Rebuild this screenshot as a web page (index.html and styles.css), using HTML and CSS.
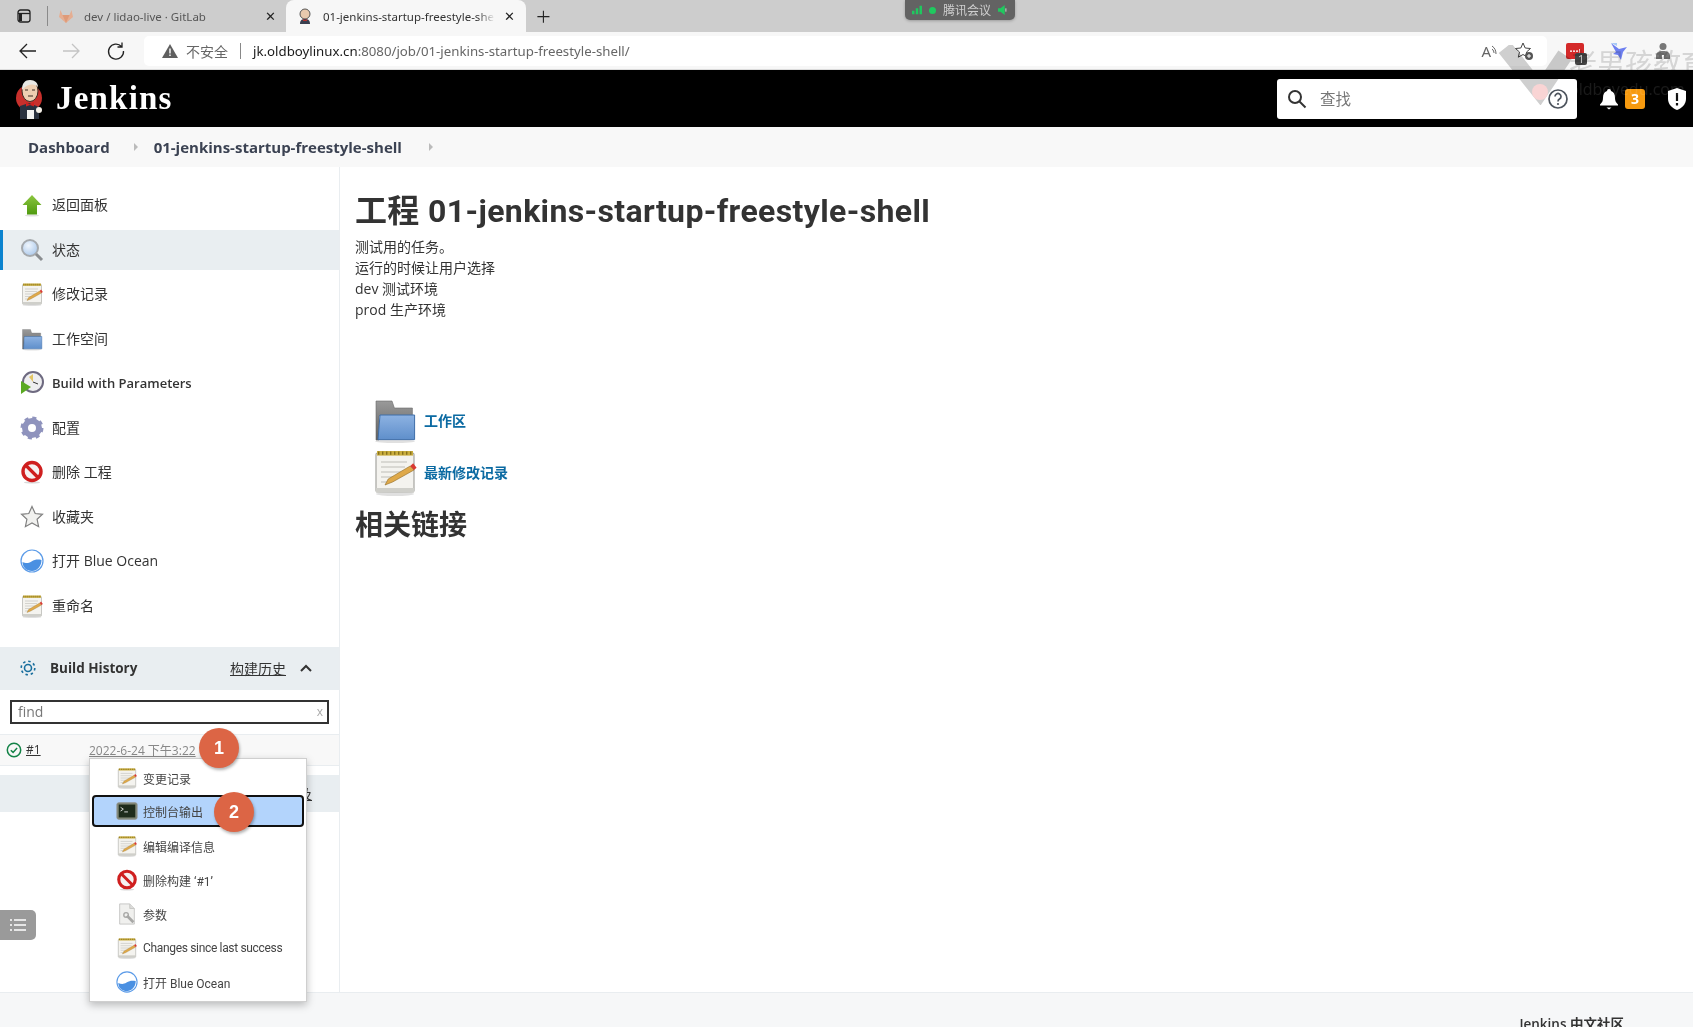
FILE: index.html
```html
<!DOCTYPE html>
<html lang="zh-CN">
<head>
    <meta charset="UTF-8">
    <title>01-jenkins-startup-freestyle-shell</title>
    <link rel="stylesheet" href="styles.css">
</head>
<body>
    <svg class="defs" width="0" height="0">
        <defs>
            <linearGradient id="g-folder-back" x1="0" y1="0" x2="0" y2="1">
                <stop offset="0" stop-color="#9a9a9a"/>
                <stop offset="1" stop-color="#5f5f5f"/>
            </linearGradient>
            <linearGradient id="g-folder-front" x1="0" y1="0" x2="0" y2="1">
                <stop offset="0" stop-color="#8db2e2"/>
                <stop offset="1" stop-color="#5f8fcb"/>
            </linearGradient>
            <linearGradient id="g-arrow" x1="0" y1="0" x2="0" y2="1">
                <stop offset="0" stop-color="#8cc63f"/>
                <stop offset="1" stop-color="#4f9a0f"/>
            </linearGradient>
            <radialGradient id="g-lens" cx=".4" cy=".35" r=".7">
                <stop offset="0" stop-color="#f0f6fd"/>
                <stop offset="1" stop-color="#a9c7ea"/>
            </radialGradient>
            <symbol id="i-note" viewBox="0 0 24 24">
                <ellipse cx="12" cy="23" rx="9.500" ry="1" fill="#000" opacity=".12"/>
                <rect x="2.500" y="2.500" width="19" height="19.500" rx=".8" fill="#f4f3ef" stroke="#a5a5a0" stroke-width=".6"/>
                <rect x="3" y="1.500" width="18" height="2.300" fill="#c9ad3e"/>
                <path d="M3.500 2.600h17" stroke="#86701c" stroke-width="1.600" stroke-dasharray=".7 1.300"/>
                <path d="M5 7h13M5 9.500h12M5 12h10M5 14.500h6M5 17h4" stroke="#bdbdb7" stroke-width=".6"/>
                <rect x="2.500" y="20" width="19" height="2.200" fill="#cfcfca"/>
                <path d="M7 18.500l1.600-3L19.600 9l1.900 2-10.700 6z" fill="#dfa94a" stroke="#8f6a25" stroke-width=".3"/>
                <path d="M19.600 9l1.900 2 1.300-1.100-1.700-2.300z" fill="#d93a33"/>
            </symbol>
            <symbol id="i-folder" viewBox="0 0 24 24">
                <ellipse cx="12" cy="22.600" rx="10" ry=".9" fill="#000" opacity=".12"/>
                <path d="M2.500 22V2.500h8l1.200 3.500h9V10H4v12z" fill="url(#g-folder-back)" stroke="#6a6a6a" stroke-width=".3"/>
                <path d="M3.500 21.800L4.500 9.500h17.300v12.300z" fill="url(#g-folder-front)" stroke="#3f6ea8" stroke-width=".5"/>
            </symbol>
            <symbol id="i-stop" viewBox="0 0 24 24">
                <ellipse cx="12" cy="22.500" rx="8" ry="1" fill="#000" opacity=".15"/>
                <circle cx="12" cy="11.500" r="9" fill="#f6f1f1" stroke="#cf1f1f" stroke-width="3.400"/>
                <path d="M6 5.500l12 12" stroke="#cf1f1f" stroke-width="3.200"/>
            </symbol>
            <symbol id="i-ocean" viewBox="0 0 24 24">
                <circle cx="12" cy="12" r="11" fill="#fff" stroke="#5b9be8" stroke-width="1.200"/>
                <path d="M2.500 13c3 1 5 2 9-.5 3.500-2 6-2.500 10-1.500 0 6-4 11-9.500 11S2.500 18 2.500 13z" fill="#4a90e2"/>
            </symbol>
        </defs>
    </svg>

    <div class="tabstrip">
        <svg class="tab-side" width="16" height="16" viewBox="0 0 16 16"><rect x="2" y="2" width="12" height="12" rx="2.500" fill="none" stroke="#222" stroke-width="1.300"/><path d="M2 5.500h12" stroke="#222" stroke-width="1.300"/><path d="M3 6h3v7H3z" fill="#222"/></svg>
        <span class="tab-sep"></span>
        <div class="tab tab-off">
            <svg class="tab-fav-faded" width="18" height="18" viewBox="0 0 18 18"><path d="M9 16L2 10 3.500 3 5.500 8h7l2-5L16 10z" fill="#eda47f"/><path d="M9 16L5.500 8h7z" fill="#e58a5c"/></svg>
            <span class="tab-title">dev / lidao-live · GitLab</span>
            <span class="tab-x">✕</span>
        </div>
        <div class="tab tab-on">
            <svg width="18" height="18" viewBox="0 0 18 18"><circle cx="9" cy="7" r="5" fill="#e8c9ad" stroke="#555"/><path d="M4 17c0-4 2-5 5-5s5 1 5 5z" fill="#3a4050"/><path d="M7 12l2 1 2-1v2H7z" fill="#b3322e"/></svg>
            <span class="tab-title">01-jenkins-startup-freestyle-shell</span>
            <span class="tab-x">✕</span>
        </div>
        <span class="tab-new">+</span>
        <div class="meeting">
            <svg width="12" height="10" viewBox="0 0 12 10"><path d="M0 6h3v4H0zM4.500 3h3v7h-3zM9 0h3v10H9z" fill="#1fc95f"/></svg>
            <i class="dot"></i>
            <span>腾讯会议</span>
            <svg width="12" height="12" viewBox="0 0 12 12"><path d="M0 4h3l5-4v12L3 8H0z" fill="#1fc95f"/><path d="M9.500 4v4" stroke="#d8f5e2"/></svg>
        </div>
    </div>

    <div class="toolbar">
        <svg class="nav-icon" width="20" height="20" viewBox="0 0 20 20"><path d="M18 10H3M9 3l-7 7 7 7" fill="none" stroke="#222" stroke-width="1.300"/></svg>
        <svg class="nav-icon" width="20" height="20" viewBox="0 0 20 20"><path d="M2 10h15M11 3l7 7-7 7" fill="none" stroke="#c4c4c4" stroke-width="1.300"/></svg>
        <svg class="nav-icon nav-reload" width="20" height="20" viewBox="0 0 20 20"><path d="M15.500 5.500A7.500 7.500 0 1 0 17.500 10M16 1.500v4.500h-4.500" fill="none" stroke="#222" stroke-width="1.300"/></svg>
        <div class="addr">
            <svg width="18" height="16" viewBox="0 0 18 16"><path d="M9 1l8 14H1z" fill="#5f5f5f"/><path d="M9 5.500v5M9 11.500v1.500" stroke="#fff" stroke-width="1.400"/></svg>
            <span class="addr-warn">不安全</span>
            <span class="addr-sep"></span>
            <span class="addr-host">jk.oldboylinux.cn</span><span class="addr-path">:8080/job/01-jenkins-startup-freestyle-shell/</span>
            <span class="addr-read">A<svg width="8" height="12" viewBox="0 0 8 12"><path d="M1 1c3 2 4 5 4 8M1 4c1.500 1 2 3 2 4" fill="none" stroke="#666"/></svg></span>
            <svg class="addr-fav" width="20" height="20" viewBox="0 0 20 20"><path d="M9 2l2.200 5 5.300.5-4 3.500 1.200 5.200L9 13.500l-4.700 2.700L5.500 11l-4-3.500L6.800 7z" fill="none" stroke="#444"/><circle cx="15" cy="15" r="4" fill="#555"/><path d="M13 15h4M15 13v4" stroke="#fff"/></svg>
        </div>
        <div class="ext ext-red"><span class="ext-dots">•••!</span><b class="ext-badge">1</b></div>
        <svg class="ext-bird" width="20" height="20" viewBox="0 0 20 20"><path d="M2 2l8 6 4-1 4-1-4 5-2 8-3-5-5-1 3-2z" fill="#6d7ff0"/><path d="M2 2h6v3z" fill="#a8c9f5"/></svg>
        <svg class="ext-puzzle" width="18" height="18" viewBox="0 0 18 18"><circle cx="9" cy="4.500" r="3.500" fill="#777"/><path d="M2 17v-3c0-4 3-5 7-5s7 1 7 5v3h-6v-4H8v4z" fill="#777"/></svg>
    </div>

    <header class="page-header">
        <svg class="logo" width="30" height="40" viewBox="0 0 30 40">
            <circle cx="14" cy="19" r="13" fill="#c8302c"/>
            <ellipse cx="15" cy="12" rx="8" ry="10.500" fill="#eecfb2" stroke="#3a2c24"/>
            <path d="M7 11C7 4 10 1 15 1s8 3 8 7C19 4 12 5 7 11z" fill="#e8e8e4"/>
            <path d="M10 11h3M17 11h3M13 17h5" stroke="#3a2c24"/>
            <path d="M5 40V27l9-3 10 4v12z" fill="#2a3240"/>
            <path d="M11 23l4 2.500 4-2.500v4.500l-4-1.500-4 1.500z" fill="#d0201f"/>
            <path d="M12 40v-9h7v9z" fill="#f2f2f2"/>
            <circle cx="24" cy="31" r="3" fill="#f4f0e8"/>
        </svg>
        <span class="logo-text">Jenkins</span>
        <div class="search-box">
            <svg width="20" height="20" viewBox="0 0 20 20"><circle cx="8" cy="8" r="6" fill="none" stroke="#333" stroke-width="2"/><path d="M12.500 12.500l6 6" stroke="#333" stroke-width="2"/></svg>
            <span class="search-text">查找</span>
            <svg class="search-help" width="22" height="22" viewBox="0 0 22 22"><circle cx="11" cy="11" r="9" fill="none" stroke="#4d545d" stroke-width="1.700"/><path d="M8 8.500a3 3 0 1 1 4.500 2.600c-1 .6-1.500 1.200-1.500 2.400" fill="none" stroke="#4d545d" stroke-width="1.700"/><circle cx="11" cy="16" r="1.100" fill="#4d545d"/></svg>
        </div>
        <svg class="bell" width="20" height="22" viewBox="0 0 20 22"><path d="M10 1a2 2 0 0 1 2 2c3 1 4 3.500 4 7 0 3 1 4.500 3 6.500v1H1v-1c2-2 3-3.500 3-6.500 0-3.500 1-6 4-7a2 2 0 0 1 2-2z" fill="#fff"/><path d="M7.500 19.500h5L10 21.500z" fill="#fff"/></svg>
        <span class="badge">3</span>
        <svg class="shield" width="20" height="24" viewBox="0 0 20 24"><path d="M10 1l9 3v8c0 5-4 9-9 11C5 21 1 17 1 12V4z" fill="#fff"/><path d="M10 6v8M10 16v2.500" stroke="#111" stroke-width="2.200"/></svg>
    </header>

    <nav class="crumbs">
        <a class="crumb">Dashboard</a><span class="crumb-arrow"></span>
        <a class="crumb">01-jenkins-startup-freestyle-shell</a><span class="crumb-arrow"></span>
    </nav>

    <div class="page-body">
        <aside class="side">
            <ul class="tasks">
                <li class="task">
                    <svg class="task-icon" viewBox="0 0 24 24"><ellipse cx="12" cy="22.500" rx="7" ry="1" fill="#000" opacity=".12"/><path d="M12 2l9.500 10H17v9.500H7V12H2.500z" fill="url(#g-arrow)"/></svg>
                    返回面板
                </li>
                <li class="task task-on">
                    <svg class="task-icon" viewBox="0 0 24 24"><circle cx="10" cy="10" r="8" fill="url(#g-lens)" stroke="#a5a9ad" stroke-width="2"/><path d="M16 16l6 6" stroke="#8a8d90" stroke-width="3"/></svg>
                    状态
                </li>
                <li class="task"><svg class="task-icon"><use href="#i-note"/></svg>修改记录</li>
                <li class="task"><svg class="task-icon"><use href="#i-folder"/></svg>工作空间</li>
                <li class="task task-latin">
                    <svg class="task-icon" viewBox="0 0 24 24"><circle cx="13" cy="11" r="10" fill="#eeeef0" stroke="#6e6a80" stroke-width="2"/><path d="M13 3v8l-4-5z" fill="#e3c565"/><path d="M13 11l5 2" stroke="#333"/><path d="M1 10l10 6-10 7z" fill="#5aa922"/></svg>
                    Build with Parameters
                </li>
                <li class="task">
                    <svg class="task-icon" viewBox="0 0 24 24"><circle cx="12" cy="12" r="7" fill="none" stroke="#8f93bd" stroke-width="6"/><circle cx="12" cy="12" r="10" fill="none" stroke="#8f93bd" stroke-width="3" stroke-dasharray="4 3.850"/></svg>
                    配置
                </li>
                <li class="task"><svg class="task-icon"><use href="#i-stop"/></svg>删除 工程</li>
                <li class="task">
                    <svg class="task-icon" viewBox="0 0 24 24"><path d="M12 1.500l3.200 7 7.300.8-5.400 5 1.500 7.400L12 18l-6.600 3.700 1.500-7.400-5.400-5 7.300-.8z" fill="#f1f1ef" stroke="#808080" stroke-width="1.200"/></svg>
                    收藏夹
                </li>
                <li class="task"><svg class="task-icon"><use href="#i-ocean"/></svg>打开 Blue Ocean</li>
                <li class="task"><svg class="task-icon"><use href="#i-note"/></svg>重命名</li>
            </ul>

            <div class="history-head">
                <svg width="16" height="16" viewBox="0 0 16 16"><circle cx="8" cy="8" r="3.500" fill="none" stroke="#1a6f9e" stroke-width="1.600"/><circle cx="8" cy="8" r="6.800" fill="none" stroke="#1a6f9e" stroke-width="1.600" stroke-dasharray="2.500 2.840"/></svg>
                <span class="history-title">Build History</span>
                <a class="history-link">构建历史</a>
                <svg class="history-chev" width="14" height="10" viewBox="0 0 14 10"><path d="M2 8l5-5 5 5" fill="none" stroke="#333" stroke-width="2"/></svg>
            </div>
            <div class="history-find">
                <div class="find-box"><span>find</span><span class="find-x">x</span></div>
            </div>
            <div class="build-row">
                <svg width="16" height="16" viewBox="0 0 16 16"><circle cx="8" cy="8" r="6.700" fill="none" stroke="#138347" stroke-width="1.500"/><path d="M4.800 8.200l2.300 2.200 4-4.400" fill="none" stroke="#138347" stroke-width="1.500"/></svg>
                <a class="build-num">#1</a>
                <a class="build-date">2022-6-24 下午3:22</a>
            </div>
            <div class="history-foot"><a class="foot-link">及</a></div>

            <div class="side-toggle">
                <svg width="18" height="14" viewBox="0 0 18 14"><path d="M5 2h12M5 7h12M5 12h12" stroke="#fff" stroke-width="1.500"/><path d="M1 2h2M1 7h2M1 12h2" stroke="#fff" stroke-width="1.500"/></svg>
            </div>

            <div class="menu">
                <div class="menu-item"><svg class="menu-icon"><use href="#i-note"/></svg>变更记录</div>
                <div class="menu-item menu-item-on">
                    <svg class="menu-icon" viewBox="0 0 24 24"><rect x="1" y="3" width="22" height="18" rx="2" fill="#7d8472" stroke="#8f918c"/><rect x="3" y="5" width="18" height="14" fill="#1f2c1c"/><path d="M5 8l3 2-3 2M9 13h4" fill="none" stroke="#e8e8e8"/></svg>
                    控制台输出
                </div>
                <div class="menu-item"><svg class="menu-icon"><use href="#i-note"/></svg>编辑编译信息</div>
                <div class="menu-item"><svg class="menu-icon"><use href="#i-stop"/></svg>删除构建 ‘#1’</div>
                <div class="menu-item">
                    <svg class="menu-icon" viewBox="0 0 24 24"><path d="M4 1h11l5 5v17H4z" fill="#f0f0ee" stroke="#c5c5c3"/><path d="M15 1v5h5" fill="#dcdcda" stroke="#c5c5c3"/><path d="M12 14l7 7" stroke="#a8a8a6" stroke-width="3"/><circle cx="11" cy="13" r="2.500" fill="none" stroke="#a8a8a6" stroke-width="1.500"/></svg>
                    参数
                </div>
                <div class="menu-item menu-item-tight"><svg class="menu-icon"><use href="#i-note"/></svg>Changes since last success</div>
                <div class="menu-item"><svg class="menu-icon"><use href="#i-ocean"/></svg>打开 Blue Ocean</div>
            </div>
            <span class="step step-one">1</span>
            <span class="step step-two">2</span>
        </aside>

        <main class="main">
            <h1 class="job-title">工程 01-jenkins-startup-freestyle-shell</h1>
            <div class="job-desc">
                <div>测试用的任务。</div>
                <div>运行的时候让用户选择</div>
                <div>dev 测试环境</div>
                <div>prod 生产环境</div>
            </div>
            <div class="big-links">
                <a class="big-link"><svg class="big-icon"><use href="#i-folder"/></svg>工作区</a>
                <a class="big-link"><svg class="big-icon"><use href="#i-note"/></svg>最新修改记录</a>
            </div>
            <h2 class="related">相关链接</h2>
        </main>
    </div>

    <footer class="page-foot"><span>Jenkins 中文社区</span></footer>

    <div class="watermark">
        <svg width="90" height="60" viewBox="0 0 90 60"><path d="M10 3l35 44L70 10" fill="none" stroke="#cfcfcf" stroke-width="16"/><circle cx="45" cy="47" r="8" fill="#f9d4d4"/></svg>
        <span class="watermark-text">老男孩教育</span>
    </div>
    <span class="watermark-url">oldboyedu.com</span>
</body>
</html>
```

FILE: styles.css
```css
* {
    box-sizing: border-box;
}
html, body {
    margin: 0;
    height: 100%;
    overflow: hidden;
}
body {
    width: 1693px;
    height: 1027px;
    display: flex;
    flex-direction: column;
    position: relative;
    background: #fff;
    color: #333;
    font-family: "Open Sans", "Noto Sans CJK SC", sans-serif;
    font-size: 14px;
}
.defs {
    position: absolute;
}

/* browser chrome */
.tabstrip {
    height: 32px;
    flex: none;
    display: flex;
    align-items: flex-end;
    background: #cdcdcd;
    position: relative;
}
.tab-side {
    margin: 0 0 8px 16px;
}
.tab-sep {
    width: 1px;
    height: 20px;
    margin: 0 9px 6px 15px;
    background: #8a8a8a;
}
.tab {
    height: 32px;
    display: flex;
    align-items: center;
    gap: 9px;
    font-size: 11.500px;
    font-family: "Noto Sans", sans-serif;
}
.tab-off {
    width: 229px;
    padding-right: 10px;
    color: #555;
}
.tab-fav-faded {
    opacity: .75;
}
.tab-on {
    width: 240px;
    padding: 0 11px 0 10px;
    color: #333;
    background: #f7f7f7;
    border-radius: 8px 8px 0 0;
}
.tab-title {
    flex: 1;
    overflow: hidden;
    white-space: nowrap;
}
.tab-on .tab-title {
    -webkit-mask-image: linear-gradient(to right, #000 90%, transparent);
    mask-image: linear-gradient(to right, #000 90%, transparent);
}
.tab-x {
    font-size: 13px;
    color: #222;
}
.tab-new {
    margin: 0 0 2px 10px;
    font-size: 26px;
    line-height: 28px;
    font-weight: 300;
    color: #222;
}
.meeting {
    position: absolute;
    left: 905px;
    top: 0;
    width: 110px;
    height: 20px;
    display: flex;
    align-items: center;
    gap: 7px;
    padding: 0 7px;
    background: #636363;
    border-radius: 0 0 5px 5px;
    box-shadow: 0 1px 3px rgba(0, 0, 0, .25);
    color: #cfcfcf;
    font-size: 12px;
    white-space: nowrap;
}
.dot {
    width: 7px;
    height: 7px;
    flex: none;
    border-radius: 50%;
    background: #1fc95f;
}
.toolbar {
    height: 38px;
    flex: none;
    display: flex;
    align-items: center;
    background: #f7f7f7;
    padding-left: 18px;
    gap: 23px;
    border-bottom: 1px solid #dcdcdc;
}
.nav-icon {
    flex: none;
}
.nav-reload {
    margin-left: 2px;
}
.addr {
    width: 1403px;
    height: 30px;
    flex: none;
    margin-left: -5px;
    display: flex;
    align-items: center;
    padding: 0 13px 0 17px;
    background: #fff;
    border-radius: 5px;
    font-size: 13.250px;
    font-family: "Noto Sans", "Noto Sans CJK SC", sans-serif;
}
.addr-warn {
    margin-left: 7px;
    color: #666;
    font-size: 14px;
}
.addr-sep {
    width: 1px;
    height: 16px;
    margin: 0 12px;
    background: #888;
}
.addr-host {
    color: #1a1a1a;
}
.addr-path {
    color: #666;
}
.addr-read {
    margin-left: auto;
    color: #666;
    font-size: 15px;
}
.addr-fav {
    margin-left: 15px;
}
.ext {
    position: relative;
    width: 18px;
    height: 16px;
    flex: none;
    margin-left: -4px;
    background: #d42a2a;
    border-radius: 2px;
    color: #fff;
}
.ext-dots {
    display: block;
    font-size: 8px;
    line-height: 16px;
    text-align: center;
}
.ext-badge {
    position: absolute;
    left: 9px;
    top: 10px;
    width: 12px;
    height: 12px;
    background: #444;
    border-radius: 2px;
    font-size: 10px;
    line-height: 12px;
    text-align: center;
    font-weight: 400;
}
.ext-bird, .ext-puzzle {
    flex: none;
    margin-left: 2px;
}

/* jenkins header */
.page-header {
    height: 57px;
    flex: none;
    display: flex;
    align-items: center;
    padding-left: 15px;
    background: #000;
}
.logo {
    flex: none;
}
.logo-text {
    margin-left: 11px;
    color: #fff;
    font-family: "Liberation Serif", serif;
    font-weight: 700;
    font-size: 33px;
    letter-spacing: 1.200px;
}
.search-box {
    width: 300px;
    height: 40px;
    margin-left: auto;
    display: flex;
    align-items: center;
    padding: 0 8px 0 10px;
    background: #fff;
    border-radius: 3px;
}
.search-text {
    margin-left: 13px;
    color: #777;
    font-size: 15.500px;
}
.search-help {
    margin-left: auto;
}
.bell {
    margin-left: 22px;
}
.badge {
    width: 20px;
    height: 20px;
    margin-left: 6px;
    background: #f79a0f;
    border-radius: 3px;
    color: #fff;
    font-weight: 700;
    text-align: center;
    line-height: 20px;
}
.shield {
    margin: 0 6px 0 22px;
}
.crumbs {
    height: 40px;
    flex: none;
    display: flex;
    align-items: center;
    padding-left: 28px;
    background: #f8f8f8;
}
.crumb {
    font-weight: 700;
    font-size: 15px;
    color: #3b4252;
}
.crumb-arrow {
    width: 0;
    height: 0;
    margin: 0 16px 0 24px;
    border-left: 4px solid #bbb;
    border-top: 4px solid transparent;
    border-bottom: 4px solid transparent;
}
.crumb-arrow:last-child {
    margin-left: 27px;
}

/* sidebar */
.page-body {
    flex: 1;
    min-height: 0;
    display: flex;
}
.side {
    width: 340px;
    flex: none;
    position: relative;
    border-right: 1px solid #e9edf0;
}
.tasks {
    list-style: none;
    margin: 0;
    padding: 18px 0 0;
}
.task {
    height: 40px;
    margin-bottom: 4.500px;
    display: flex;
    align-items: center;
    gap: 8px;
    font-size: 14px;
    line-height: 18px;
    color: #333;
    border-left: 3px solid transparent;
    padding-left: 17px;
}
.task-latin {
    font-size: 13px;
    font-weight: 600;
}
.task-on {
    background: #e9eef1;
    border-left-color: #0b83cf;
}
.task-icon {
    width: 24px;
    height: 24px;
    flex: none;
}
.history-head {
    height: 43px;
    margin-top: 21px;
    display: flex;
    align-items: center;
    padding: 0 26px 0 20px;
    background: #e9eef1;
}
.history-title {
    margin-left: 14px;
    font-weight: 700;
    font-size: 13.500px;
}
.history-link {
    margin-left: auto;
    font-size: 14px;
    text-decoration: underline;
}
.history-chev {
    margin-left: 13px;
}
.history-find {
    height: 45px;
    padding: 10px 10px 0;
    border-bottom: 1px solid #e9edf0;
}
.find-box {
    height: 24px;
    display: flex;
    align-items: center;
    justify-content: space-between;
    padding: 0 4px 0 6px;
    border: 2px solid #333;
    color: #777;
    font-size: 14px;
}
.find-x {
    color: #aaa;
    font-size: 12px;
}
.build-row {
    height: 31px;
    display: flex;
    align-items: center;
    padding-left: 6px;
    background: #f8f8f8;
    border-bottom: 1px solid #e9edf0;
    font-size: 12px;
}
.build-num {
    margin-left: 4px;
    width: 63px;
    text-decoration: underline;
    color: #333;
}
.build-date {
    color: #888;
    text-decoration: underline;
}
.history-foot {
    height: 37px;
    margin-top: 9px;
    display: flex;
    align-items: center;
    padding-left: 298px;
    background: #e9eef1;
    font-size: 14px;
}
.foot-link {
    text-decoration: underline;
}
.side-toggle {
    position: absolute;
    left: 0;
    top: 743px;
    width: 36px;
    height: 30px;
    display: flex;
    align-items: center;
    justify-content: center;
    background: #9a9a9a;
    border-radius: 0 5px 5px 0;
}

/* build context menu */
.menu {
    position: absolute;
    left: 89px;
    top: 591px;
    width: 218px;
    padding: 2px 2px 2px;
    background: #fff;
    border: 1px solid #cfcfcf;
    box-shadow: 0 3px 8px rgba(0, 0, 0, .25);
    font-family: Roboto, "Noto Sans CJK SC", sans-serif;
    font-size: 12px;
    color: #444;
}
.menu-item {
    height: 34px;
    display: flex;
    align-items: center;
    gap: 5px;
    padding-left: 24px;
}
.menu-item-on {
    height: 32px;
    margin-bottom: 2px;
    background: #b3d4fc;
    border: 2px solid #111;
    border-radius: 4px;
    padding-left: 22px;
}
.menu-item-tight {
    letter-spacing: -.33px;
}
.menu-icon {
    width: 22px;
    height: 22px;
    flex: none;
}
.step {
    position: absolute;
    width: 40px;
    height: 40px;
    border-radius: 50%;
    background: #dc6545;
    color: #fff;
    font: 700 18px/40px "Liberation Sans", sans-serif;
    text-align: center;
    box-shadow: 1px 2px 3px rgba(0, 0, 0, .3);
}
.step-one {
    left: 199px;
    top: 561px;
}
.step-two {
    left: 214px;
    top: 625px;
}

/* main column */
.main {
    flex: 1;
    padding: 22px 15px 0;
}
.job-title {
    margin: 0;
    font-family: Roboto, "Noto Sans CJK SC", sans-serif;
    font-size: 32px;
    line-height: 44px;
    font-weight: 700;
    letter-spacing: .37px;
    color: #333;
}
.job-desc {
    margin-top: 3px;
    line-height: 21px;
    font-size: 14px;
}
.big-links {
    margin-top: 74px;
    padding-left: 16px;
}
.big-link {
    display: flex;
    align-items: center;
    height: 52px;
    gap: 5px;
    color: #0b6aa2;
    font-weight: 600;
    font-size: 14px;
}
.big-icon {
    width: 48px;
    height: 48px;
    flex: none;
}
.related {
    margin: 7px 0 0;
    font-size: 28px;
    line-height: 38px;
    font-weight: 700;
}
.page-foot {
    height: 35px;
    flex: none;
    padding: 20px 69px 0 0;
    text-align: right;
    background: #f6f7f8;
    border-top: 1px solid #e9edf0;
    font-size: 13.500px;
    font-weight: 600;
    overflow: hidden;
}

/* translucent watermark over the top right corner */
.watermark {
    position: absolute;
    left: 1495px;
    top: 45px;
    width: 198px;
    height: 60px;
    overflow: hidden;
    mix-blend-mode: multiply;
    pointer-events: none;
}
.watermark-text {
    position: absolute;
    left: 74px;
    top: 0;
    white-space: nowrap;
    font-size: 28px;
    line-height: 36px;
    color: #dcdcdc;
}
.watermark-url {
    position: absolute;
    left: 1569px;
    top: 78px;
    width: 124px;
    overflow: hidden;
    font-size: 16px;
    color: rgba(255, 255, 255, .1);
    pointer-events: none;
}
```
